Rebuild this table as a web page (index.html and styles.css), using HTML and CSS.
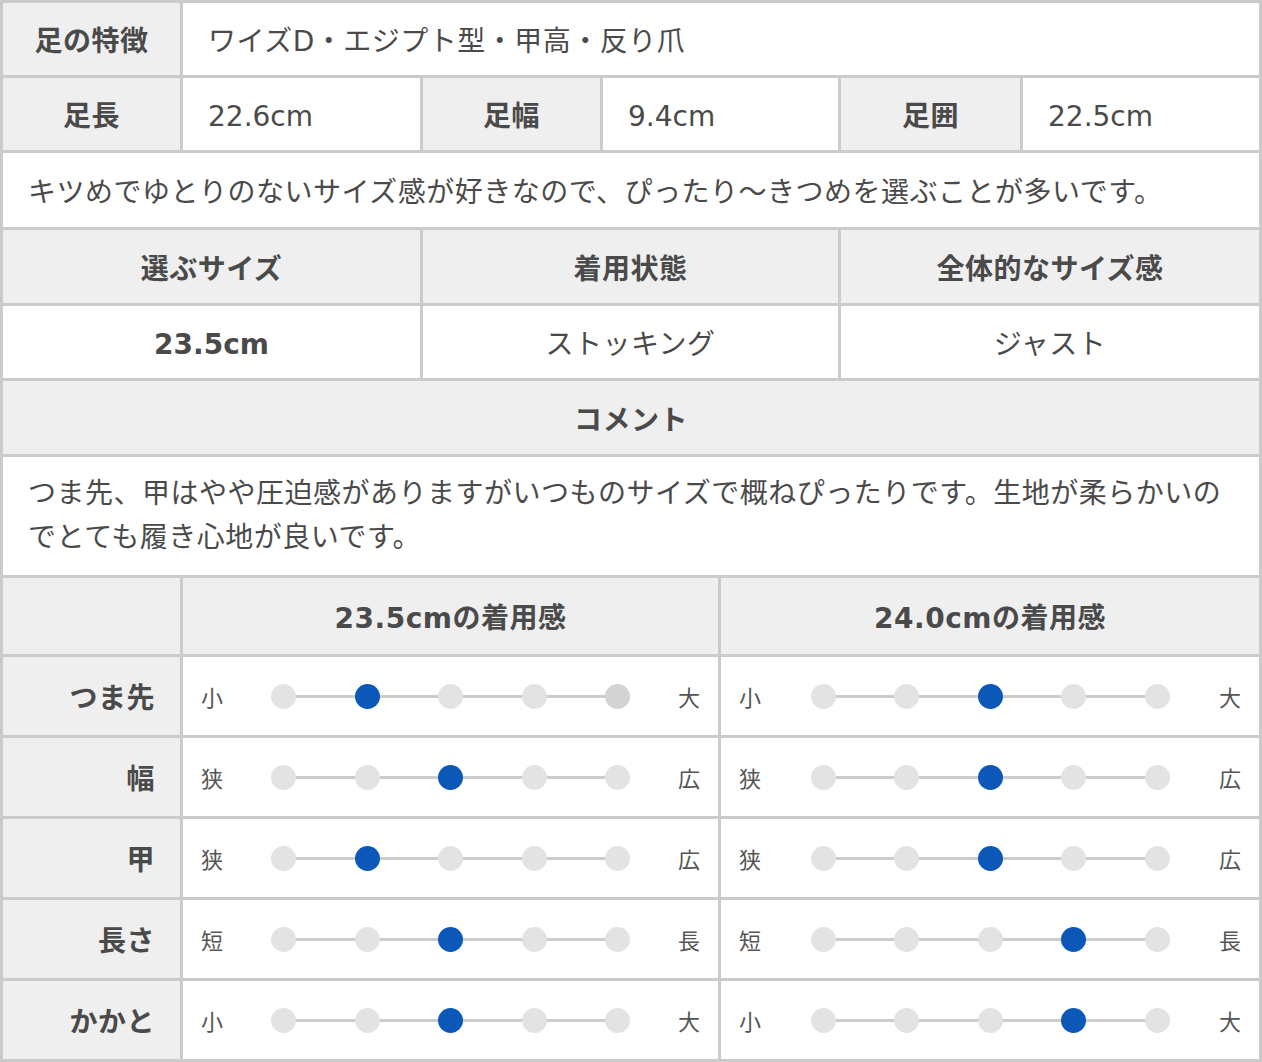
FILE: index.html
```html
<!DOCTYPE html>
<html lang="ja">
<head>
<meta charset="utf-8">
<title>サイズ感</title>
<link rel="stylesheet" href="styles.css">
</head>
<body>
<div class="sheet">
  <div class="row r-feature h72">
    <div class="cell head">足の特徴</div>
    <div class="cell val">ワイズD・エジプト型・甲高・反り爪</div>
  </div>
  <div class="row r-size h72">
    <div class="cell head">足長</div>
    <div class="cell val num">22.6cm</div>
    <div class="cell head">足幅</div>
    <div class="cell val num">9.4cm</div>
    <div class="cell head">足囲</div>
    <div class="cell val num">22.5cm</div>
  </div>
  <div class="row r-full h74">
    <div class="cell val">キツめでゆとりのないサイズ感が好きなので、ぴったり～きつめを選ぶことが多いです。</div>
  </div>
  <div class="row r-three h73">
    <div class="cell head">選ぶサイズ</div>
    <div class="cell head">着用状態</div>
    <div class="cell head">全体的なサイズ感</div>
  </div>
  <div class="row r-three h72">
    <div class="cell center strong num">23.5cm</div>
    <div class="cell center">ストッキング</div>
    <div class="cell center">ジャスト</div>
  </div>
  <div class="row r-full h73">
    <div class="cell head">コメント</div>
  </div>
  <div class="row r-full h118">
    <div class="cell val para">つま先、甲はやや圧迫感がありますがいつものサイズで概ねぴったりです。生地が柔らかいのでとても履き心地が良いです。</div>
  </div>
  <div class="row r-rate h76">
    <div class="cell head"></div>
    <div class="cell head">23.5cmの着用感</div>
    <div class="cell head">24.0cmの着用感</div>
  </div>

  <div class="row r-rate h78">
    <div class="cell head rlabel">つま先</div>
    <div class="cell scale">
      <span class="end">小</span>
      <span class="track"><i class="dot"></i><i class="dot on"></i><i class="dot"></i><i class="dot"></i><i class="dot dim"></i></span>
      <span class="end">大</span>
    </div>
    <div class="cell scale">
      <span class="end">小</span>
      <span class="track"><i class="dot"></i><i class="dot"></i><i class="dot on"></i><i class="dot"></i><i class="dot"></i></span>
      <span class="end">大</span>
    </div>
  </div>
  <div class="row r-rate h78">
    <div class="cell head rlabel">幅</div>
    <div class="cell scale">
      <span class="end">狭</span>
      <span class="track"><i class="dot"></i><i class="dot"></i><i class="dot on"></i><i class="dot"></i><i class="dot"></i></span>
      <span class="end">広</span>
    </div>
    <div class="cell scale">
      <span class="end">狭</span>
      <span class="track"><i class="dot"></i><i class="dot"></i><i class="dot on"></i><i class="dot"></i><i class="dot"></i></span>
      <span class="end">広</span>
    </div>
  </div>
  <div class="row r-rate h78">
    <div class="cell head rlabel">甲</div>
    <div class="cell scale">
      <span class="end">狭</span>
      <span class="track"><i class="dot"></i><i class="dot on"></i><i class="dot"></i><i class="dot"></i><i class="dot"></i></span>
      <span class="end">広</span>
    </div>
    <div class="cell scale">
      <span class="end">狭</span>
      <span class="track"><i class="dot"></i><i class="dot"></i><i class="dot on"></i><i class="dot"></i><i class="dot"></i></span>
      <span class="end">広</span>
    </div>
  </div>
  <div class="row r-rate h78">
    <div class="cell head rlabel">長さ</div>
    <div class="cell scale">
      <span class="end">短</span>
      <span class="track"><i class="dot"></i><i class="dot"></i><i class="dot on"></i><i class="dot"></i><i class="dot"></i></span>
      <span class="end">長</span>
    </div>
    <div class="cell scale">
      <span class="end">短</span>
      <span class="track"><i class="dot"></i><i class="dot"></i><i class="dot"></i><i class="dot on"></i><i class="dot"></i></span>
      <span class="end">長</span>
    </div>
  </div>
  <div class="row r-rate h78">
    <div class="cell head rlabel">かかと</div>
    <div class="cell scale">
      <span class="end">小</span>
      <span class="track"><i class="dot"></i><i class="dot"></i><i class="dot on"></i><i class="dot"></i><i class="dot"></i></span>
      <span class="end">大</span>
    </div>
    <div class="cell scale">
      <span class="end">小</span>
      <span class="track"><i class="dot"></i><i class="dot"></i><i class="dot"></i><i class="dot on"></i><i class="dot"></i></span>
      <span class="end">大</span>
    </div>
  </div>
</div>
</body>
</html>
```
FILE: styles.css
```css
* { box-sizing: border-box; }

html, body {
  margin: 0;
  padding: 0;
  background: #ffffff;
}

body {
  font-family: "DejaVu Sans", "Noto Sans CJK JP", sans-serif;
  font-size: 28px;
  letter-spacing: 0.5px;
  color: #4a4a4a;
}

.sheet {
  width: 1262px;
  background: #cbcbcb;
  padding: 3px;
  display: flex;
  flex-direction: column;
  gap: 3px;
}

.row {
  display: grid;
  gap: 3px;
}

.r-feature { grid-template-columns: 177px 1fr; }
.r-size { grid-template-columns: 177px 237px 177px 235px 179px 1fr; }
.r-full { grid-template-columns: 1fr; }
.r-three { grid-template-columns: 417px 415px 1fr; }
.r-rate { grid-template-columns: 177px 535px 1fr; }

.h72 { height: 72px; }
.h73 { height: 73px; }
.h74 { height: 74px; }
.h76 { height: 76px; }
.h78 { height: 78px; }
.h118 { height: 118px; }

.cell {
  background: #ffffff;
  display: flex;
  align-items: center;
  min-width: 0;
}

.head {
  background: #efefef;
  justify-content: center;
  font-weight: 700;
}

.val {
  padding-left: 25px;
  font-weight: 400;
}

.num {
  letter-spacing: 0;
  padding-top: 4px;
}

.center {
  justify-content: center;
}

.strong {
  font-weight: 700;
}

.para {
  line-height: 44px;
  padding-right: 20px;
}

.rlabel {
  justify-content: flex-end;
  padding-right: 25px;
}

.scale {
  justify-content: space-between;
  padding: 0 18px;
}

.end {
  font-size: 22px;
  width: 22px;
  text-align: center;
  letter-spacing: 0;
  color: #555555;
  font-family: "Noto Sans CJK JP", sans-serif;
}

.track {
  width: 359px;
  height: 25px;
  display: flex;
  justify-content: space-between;
  align-items: center;
  background: linear-gradient(#cccccc, #cccccc) center / 100% 3px no-repeat;
}

.dot {
  display: block;
  width: 25px;
  height: 25px;
  border-radius: 50%;
  background: #e3e3e3;
}

.dot.dim { background: #d3d3d3; }
.dot.on { background: #0b58b8; }
```
